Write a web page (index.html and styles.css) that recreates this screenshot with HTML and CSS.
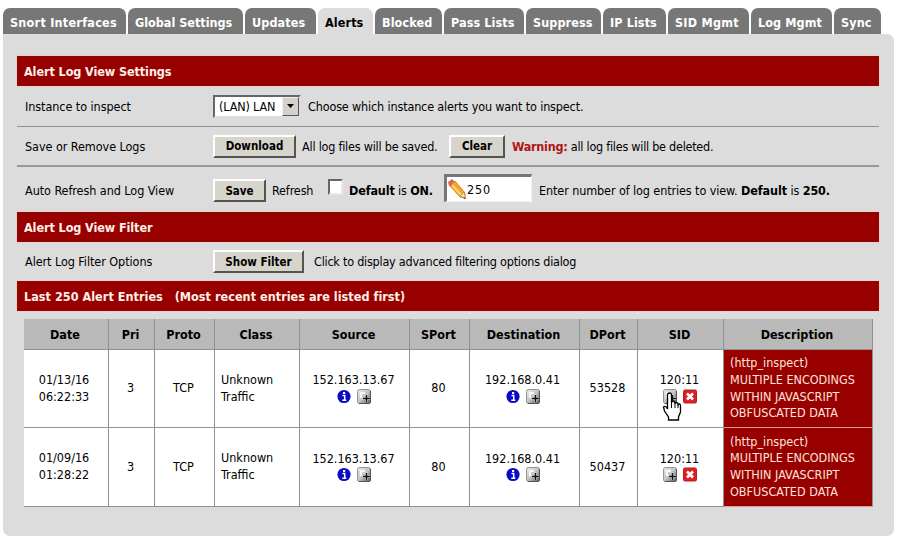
FILE: index.html
```
<!DOCTYPE html>
<html lang="en">
<head>
<meta charset="utf-8">
<title>Snort Alerts</title>
<link rel="stylesheet" href="styles.css">
</head>
<body>
<svg class="defs" aria-hidden="true">
  <defs>
    <linearGradient id="gray" x1="0" y1="0" x2="1" y2="1"><stop offset="0" stop-color="#eee"/><stop offset=".5" stop-color="#c4c4c4"/><stop offset="1" stop-color="#555"/></linearGradient>
    <symbol id="info" viewBox="0 0 14 14"><circle cx="7" cy="7" r="6.6" fill="#0a0ac4"/><path d="M5.500 6H7.700v4.600M5.300 10.800h4" stroke="#fff" stroke-width="1.500" fill="none"/><rect x="6" y="2.500" width="2.200" height="2" fill="#fff"/></symbol>
    <symbol id="plus" viewBox="0 0 14 15"><rect x=".5" y=".5" width="13" height="14" rx="2" fill="url(#gray)" stroke="#929292"/><path d="M3 3h5v2H5v4H3z" fill="#f7f7f7"/><path d="M13.5 2v11q0 1.5-1.5 1.5H2" fill="none" stroke="#555"/><path d="M5.500 9.500h7.500M9.500 5.500v7.500" stroke="#ddd" stroke-width="3"/><path d="M6 9.500h7M9.500 6v7" stroke="#111" stroke-width="1.500"/></symbol>
    <symbol id="cross" viewBox="0 0 14 14"><rect x=".5" y=".5" width="13" height="13" rx="1.5" fill="#dc2024" stroke="#b51c20"/><path d="M4 4l6 6M10 4l-6 6" stroke="#fff" stroke-width="2.6"/></symbol>
  </defs>
</svg>
<nav class="tabs">
  <a class="tab t1">Snort Interfaces</a><a class="tab t2">Global Settings</a><a class="tab t3">Updates</a><a class="tab t4 active">Alerts</a><a class="tab t5">Blocked</a><a class="tab t6">Pass Lists</a><a class="tab t7">Suppress</a><a class="tab t8">IP Lists</a><a class="tab t9">SID Mgmt</a><a class="tab t10">Log Mgmt</a><a class="tab t11">Sync</a>
</nav>
<main class="panel">
  <h2 class="bar">Alert Log View Settings</h2>
  <div class="row r1">
    <div class="label">Instance to inspect</div>
    <div class="select"><span>(LAN) LAN</span><i class="arrow"><svg width="7" height="4"><path d="M0 0h7L3.500 4z"/></svg></i></div>
    <span class="txt choose">Choose which instance alerts you want to inspect.</span>
  </div>
  <div class="row r2">
    <div class="label">Save or Remove Logs</div>
    <button class="btn download">Download</button>
    <span class="txt saved">All log files will be saved.</span>
    <button class="btn clear">Clear</button>
    <span class="txt deleted"><b class="warn">Warning:</b> all log files will be deleted.</span>
  </div>
  <div class="row r3">
    <div class="label">Auto Refresh and Log View</div>
    <button class="btn save">Save</button>
    <span class="txt refresh">Refresh</span>
    <span class="check"></span>
    <span class="txt default"><b>Default</b> is <b>ON.</b></span>
    <div class="field"><svg width="20" height="22" viewBox="0 0 20 22"><path d="M1 4L5 1L9 5L5 9L2 8z" fill="#d96a55"/><path d="M3 8L8 3L18 15V20L13 19z" fill="#f6a62a" stroke="#c57920" stroke-width=".8"/><path d="M5.500 7.500L15 18" stroke="#ffd36d" stroke-width="2"/><path d="M13 18L17 14L18.500 20.500z" fill="#eee0ab" stroke="#9b8050" stroke-width=".6"/><path d="M17 19l2 2-2.500-.6z" fill="#333"/></svg><span>250</span></div>
    <span class="txt enter">Enter number of log entries to view. <b>Default</b> is <b>250.</b></span>
  </div>
  <h2 class="bar">Alert Log View Filter</h2>
  <div class="row r4">
    <div class="label">Alert Log Filter Options</div>
    <button class="btn filter">Show Filter</button>
    <span class="txt click">Click to display advanced filtering options dialog</span>
  </div>
  <h2 class="bar last">Last 250 Alert Entries &nbsp; (Most recent entries are listed first)</h2>
  <table class="alerts">
    <colgroup><col class="c1"><col class="c2"><col class="c3"><col class="c4"><col class="c5"><col class="c6"><col class="c7"><col class="c8"><col class="c9"><col class="c10"></colgroup>
    <thead><tr><th>Date</th><th>Pri</th><th>Proto</th><th>Class</th><th>Source</th><th>SPort</th><th>Destination</th><th>DPort</th><th>SID</th><th>Description</th></tr></thead>
    <tbody>
      <tr>
        <td class="date">01/13/16<br>06:22:33</td><td>3</td><td>TCP</td><td class="left">Unknown<br>Traffic</td>
        <td>152.163.13.67<div class="icons"><svg><use href="#info"/></svg><svg><use href="#plus"/></svg></div></td><td>80</td>
        <td class="dest">192.168.0.41<div class="icons"><svg><use href="#info"/></svg><svg><use href="#plus"/></svg></div></td><td>53528</td>
        <td>120:11<div class="icons"><svg><use href="#plus"/></svg><svg><use href="#cross"/></svg><svg class="hand" viewBox="0 0 19 29"><path d="M5 16V3q0-2 2-2t2 2v8q0-2 1.500-2t2 2v1q0-1.500 1.500-1.500t1.500 2v1q0-1.500 1.300-1.500T18 14v6l-2 5v3H6v-3l-4-6-1-4q2-2 4 2z" fill="#fff" stroke="#000" stroke-width="1.300"/><path d="M9 11v5M12.500 12v4M15.500 13v3" stroke="#000"/></svg></div></td>
        <td class="desc">(http_inspect)<br>MULTIPLE ENCODINGS<br>WITHIN JAVASCRIPT<br>OBFUSCATED DATA</td>
      </tr>
      <tr class="end">
        <td class="date">01/09/16<br>01:28:22</td><td>3</td><td>TCP</td><td class="left">Unknown<br>Traffic</td>
        <td>152.163.13.67<div class="icons"><svg><use href="#info"/></svg><svg><use href="#plus"/></svg></div></td><td>80</td>
        <td class="dest">192.168.0.41<div class="icons"><svg><use href="#info"/></svg><svg><use href="#plus"/></svg></div></td><td>50437</td>
        <td>120:11<div class="icons"><svg><use href="#plus"/></svg><svg><use href="#cross"/></svg></div></td>
        <td class="desc">(http_inspect)<br>MULTIPLE ENCODINGS<br>WITHIN JAVASCRIPT<br>OBFUSCATED DATA</td>
      </tr>
    </tbody>
  </table>
</main>
</body>
</html>
```
FILE: styles.css
```
* { box-sizing: border-box; }
body { margin: 0; padding: 8px 6px 0 3px; width: 900px; height: 540px; overflow: hidden; background: #fff; color: #000; font: 12.5px/17px "DejaVu Sans Condensed", "DejaVu Sans", sans-serif; font-stretch: condensed; letter-spacing: -.15px; }
.defs { position: absolute; width: 0; height: 0; }
.tabs { display: flex; gap: 2px; height: 26px; }
.tab { flex: none; padding: 6px 0 0 7px; border-radius: 7px 7px 0 0; background: #777; color: #fff; font-weight: bold; white-space: nowrap; letter-spacing: .1px; }
.tab.active { background: #dcdcdc; color: #000; }
.t1 { width: 123px; letter-spacing: .25px; } .t2 { width: 115px; letter-spacing: 0; } .t3 { width: 71px; } .t4 { width: 55px; } .t5 { width: 67px; } .t6 { width: 80px; } .t7 { width: 75px; } .t8 { width: 63px; } .t9 { width: 81px; letter-spacing: .25px; } .t10 { width: 81px; } .t11 { width: 47px; }
.panel { height: 502px; padding: 22px 15px 0 14px; background: #dcdcdc; border-radius: 0 7px 7px 7px; }
.bar { margin: 0; height: 30px; padding: 1px 0 0 6px; background: #980000; border: 1px solid #800c0c; outline: 1px solid #f2cdc8; color: #fff0e8; font-size: 12.5px; line-height: 28px; white-space: pre; letter-spacing: -.08px; }
.last { letter-spacing: .04px; }
.row { display: flex; align-items: center; white-space: nowrap; }
.r1 { height: 41px; border-bottom: 1px solid #919191; }
.r2 { height: 40px; border-bottom: 2px solid #999; }
.r3 { height: 45px; padding-top: 2px; }
.r4 { height: 39px; }
.label { width: 196px; padding-left: 8px; flex: none; letter-spacing: -.06px; }
.txt { flex: none; }
.select { width: 88px; height: 23px; flex: none; display: flex; align-items: center; padding-left: 4px; background: #fff; border: 2px solid; border-color: #666 #ddd #ddd #666; }
.select span { flex: 1; }
.arrow { width: 17px; height: 19px; display: flex; align-items: center; justify-content: center; background: #d5d1c8; border: 1px solid; border-color: #eee #555 #555 #eee; }
.choose { margin-left: 7px; }
.btn { flex: none; height: 23px; padding: 0; background: #d7d4cb; border: 2px solid; border-color: #fff #55554f #55554f #fff; color: #000; font: bold 11.5px "DejaVu Sans Condensed", "DejaVu Sans", sans-serif; font-stretch: condensed; }
.download { width: 83px; } .clear { width: 56px; } .save { width: 53px; } .filter { width: 91px; }
.saved { width: 140px; margin-left: 6px; margin-right: 7px; letter-spacing: -.22px; }
.deleted { margin-left: 7px; letter-spacing: -.25px; }
.warn { color: #b01418; }
.refresh { width: 49px; margin-left: 6px; }
.check { width: 15px; height: 16px; margin: -7px 6px 0 7px; background: #fff; border: 2px solid; border-color: #666 #e8e8e8 #e8e8e8 #666; }
.default { width: 86px; margin-right: 9px; }
.field { width: 88px; height: 28px; flex: none; display: flex; align-items: center; background: #fff; border: 3px solid; border-color: #777 #f2f2f2 #f2f2f2 #777; border-right-width: 1px; border-bottom-width: 1px; margin-top: -5px; }
.field span { letter-spacing: .9px; }
.enter { margin-left: 7px; letter-spacing: -.1px; }
.click { margin-left: 10px; letter-spacing: -.23px; }
.alerts { margin: 8px 0 0 7px; width: 849px; table-layout: fixed; border-collapse: separate; border-spacing: 0; background: #fff; letter-spacing: 0; }
.c1 { width: 85px; } .c2 { width: 46px; } .c3 { width: 60px; } .c4 { width: 85px; } .c5 { width: 110px; } .c6 { width: 60px; } .c7 { width: 110px; } .c8 { width: 58px; } .c9 { width: 86px; } .c10 { width: 149px; }
th, td { padding: 0; text-align: center; border-right: 1px solid #919191; border-bottom: 1px solid #919191; }
th { height: 31px; padding-right: 2px; background: #b9b9b9; white-space: nowrap; }
td { height: 78px; padding-right: 2px; line-height: 16.700px; }
.end td { height: 79px; }
td.date { padding-right: 4px; }
td.dest { padding-right: 4px; }
td.left { text-align: left; padding-left: 6px; }
td.desc { text-align: left; padding-left: 6px; background: #980000; color: #ffe3dc; white-space: nowrap; border-bottom-color: #d99; }
.icons { position: relative; display: flex; justify-content: center; gap: 6px; height: 16px; }
.icons svg { width: 14px; height: 15px; }
.icons .hand { position: absolute; left: 24px; top: 3px; width: 20px; height: 29px; }
```
